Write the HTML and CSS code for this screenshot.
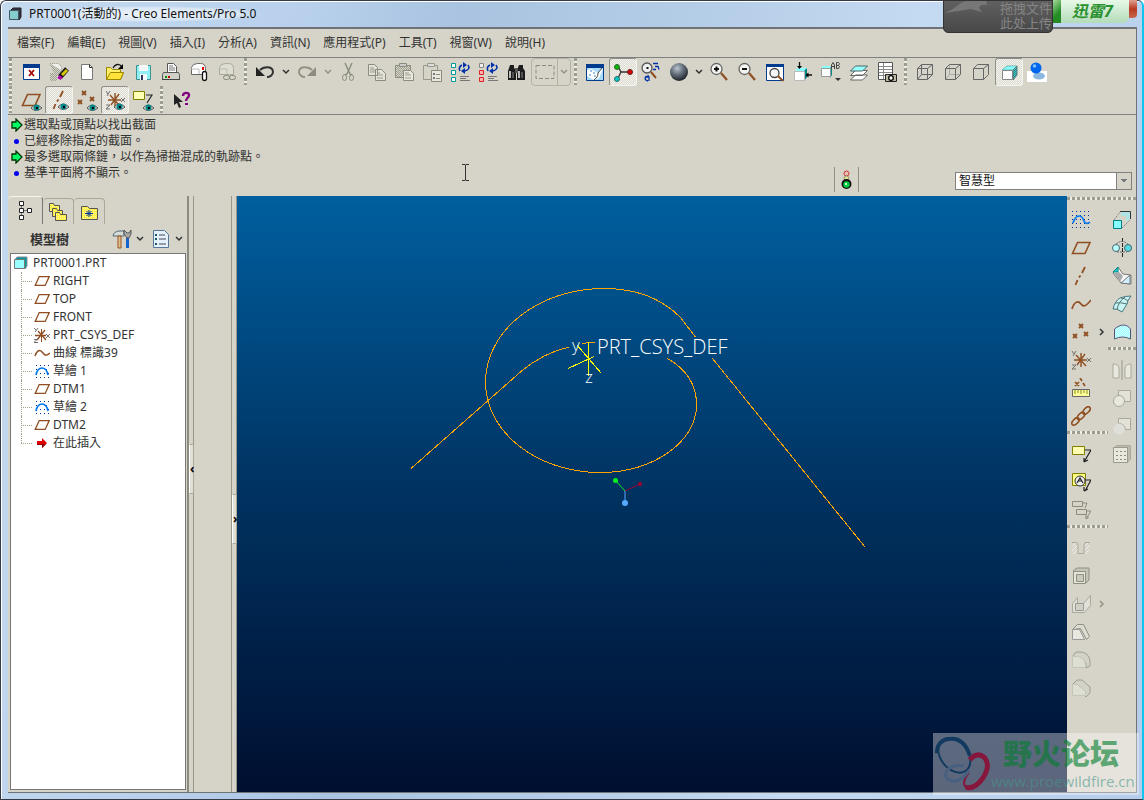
FILE: index.html
```html
<!DOCTYPE html>
<html lang="zh-Hant">
<head>
<meta charset="utf-8">
<title>PRT0001(活動的) - Creo Elements/Pro 5.0</title>
<link rel="stylesheet" href="styles.css">
</head>
<body>
<svg class="sprite" aria-hidden="true">
  <defs>
    <pattern id="dither" width="2" height="2" patternUnits="userSpaceOnUse"><path d="M0 0h1v1H0zM1 1h1v1H1z" fill="#a0a090"/></pattern>
    <pattern id="cyandither" width="2" height="2" patternUnits="userSpaceOnUse"><path d="M0 0h2v2H0z" fill="#99ffff"/><path d="M0 0h1v1H0zM1 1h1v1H1z" fill="#d8ffff"/></pattern>
    <pattern id="tealdither" width="2" height="2" patternUnits="userSpaceOnUse"><path d="M0 0h2v2H0z" fill="#009999"/><path d="M0 0h1v1H0zM1 1h1v1H1z" fill="#66b8b8"/></pattern>
    <pattern id="yellowdither" width="2" height="2" patternUnits="userSpaceOnUse"><path d="M0 0h2v2H0z" fill="#ffee44"/><path d="M0 0h1v1H0z" fill="#fff8a0"/></pattern>
    <radialGradient id="ball" cx=".4" cy=".3" r=".75"><stop offset="0" stop-color="#b8c4d0"/><stop offset=".45" stop-color="#66717d"/><stop offset="1" stop-color="#15181c"/></radialGradient>
  </defs>
  <symbol id="i-chev" viewBox="0 0 8 8"><path d="M1 2l3 3 3-3" fill="none" stroke="currentColor" stroke-width="1.500"/></symbol>
  <symbol id="i-chevr" viewBox="0 0 8 8"><path d="M2 1l3 3-3 3" fill="none" stroke="currentColor" stroke-width="1.500"/></symbol>
  <symbol id="i-plane" viewBox="0 0 20 20"><path d="M6.500 4.500H19l-5 11H1.500z" fill="none" stroke="#8f4f22" stroke-width="1.600"/></symbol>
  <symbol id="i-axis" viewBox="0 0 20 20"><path d="M14 1l-3 6M9.500 9.500l-1.500 2M6.500 14l-2 5" fill="none" stroke="#8f4f22" stroke-width="1.800"/></symbol>
  <symbol id="i-curve" viewBox="0 0 20 20"><path d="M1 15C3 8 7 6 10 10s6 1 10-4" fill="none" stroke="#8f4f22" stroke-width="1.700"/></symbol>
  <symbol id="i-curve-s" viewBox="0 0 16 16"><path d="M1 11C3 5 6 4 9 8s4 2 7 0" fill="none" stroke="#8f4f22" stroke-width="1.500"/></symbol>
  <symbol id="i-points" viewBox="0 0 20 20"><path d="M8 2l4 4m0-4L8 6M2 12l4 4m0-4l-4 4M13 10l4 4m0-4l-4 4" fill="none" stroke="#8f4f22" stroke-width="1.800"/></symbol>
  <symbol id="i-csys" viewBox="0 0 20 20"><path d="M3 10h13M6 15L14 4M5 5l10 11M10 3v14" fill="none" stroke="#8f4f22" stroke-width="1.400"/><path d="M1 1l2 3m2-3L2 6M16 8l4 4m0-4l-4 4M1 15h4l-4 4h4" fill="none" stroke="#707070"/></symbol>
  <symbol id="i-csys-s" viewBox="0 0 16 16"><path d="M1 8.500h11M3 13l8-10M4 4l8 9" fill="none" stroke="#8f4f22" stroke-width="1.300"/><path d="M7.500 2v13" stroke="#8f4f22"/><path d="M0 1l2 2m2-2L1 5M12 7l4 4m0-4l-4 4M0 12.500h3l-3 3h4" fill="none" stroke="#707070"/></symbol>
  <symbol id="i-sketch" viewBox="0 0 20 20"><path d="M1 1.500h18M1 5.500h18M1 9.500h18M1 13.500h18M1 17.500h18" stroke="#003399" stroke-dasharray="1 3"/><path d="M2 13C4 7 6 6 8 6s4 2 5 5 4 3 6 1" fill="none" stroke="#0078f0" stroke-width="1.700"/></symbol>
  <symbol id="i-sketch-s" viewBox="0 0 16 16"><path d="M2 2.500h13M2 6.500h3M12 6.500h3M2 10.500h13M2 14.500h13" stroke="#003399" stroke-dasharray="1 3"/><path d="M2 12C3 7 5 5 8 5s5 2 6 7" fill="none" stroke="#0078f0" stroke-width="1.700"/></symbol>
  <symbol id="i-eye" viewBox="0 0 11 7"><path d="M0 4Q5 -2 11 4Q5 9 0 4z" fill="#ddd" stroke="#555"/><circle cx="5.500" cy="3.500" r="3" fill="#008888"/><path d="M5 3h2v2H5z" fill="#000"/></symbol>
  <symbol id="i-cube" viewBox="0 0 16 16"><path d="M2 5l2-3h10v9l-2 3z" fill="#009999" stroke="#889"/><path d="M1.500 4.500h10v9h-10z" fill="#99ffff" stroke="#777"/></symbol>
  <symbol id="i-tag" viewBox="0 0 20 20"><path d="M1.500 2.500h12v8h-12z" fill="#ffffb4" stroke="#808000"/><path d="M14 6h6l-7 12M13 18v-4m0 4l4-2" fill="none" stroke="#222" stroke-width="1.200"/></symbol>
  <symbol id="i-go" viewBox="0 0 12 14"><path d="M1 4h4V1l6 6-6 6v-3H1z" fill="#00ff66" stroke="#003300" stroke-width="1.300"/></symbol>
</svg>

<div class="window">
  <header class="titlebar">
    <svg class="s16" viewBox="0 0 16 16"><path d="M2 5l3-3h8v9l-2 3z" fill="#334" stroke="#222"/><path d="M1.500 4.500h9v9h-9z" fill="#84cfcc" stroke="#456"/></svg>
    <h1>PRT0001(活動的) - Creo Elements/Pro 5.0</h1>
  </header>

  <div class="client">
    <nav class="menubar">
      <button>檔案(F)</button><button>編輯(E)</button><button>視圖(V)</button><button>插入(I)</button><button>分析(A)</button><button>資訊(N)</button><button>應用程式(P)</button><button>工具(T)</button><button>視窗(W)</button><button>說明(H)</button>
    </nav>

    <div class="toolbars">
      <div class="toolrow">
        <i class="grip"></i>
        <button class="tool" aria-label="關閉視窗"><svg viewBox="0 0 20 20"><path d="M2.500 2.500h16v15h-16z" fill="#fff" stroke="#003b8e"/><path d="M2 2h17v4H2z" fill="#003b8e"/><path d="M8 8l5 6M13 8l-5 6" stroke="#a80000" stroke-width="1.700"/></svg></button>
        <button class="tool" aria-label="拭除"><svg viewBox="0 0 20 20"><path d="M0 1h9l4 4v5l-5 3v6H1v-8h4z" fill="url(#dither)"/><path d="M2 2h7l3 3v3z" fill="#f0f0ec"/><path d="M18 7l-7 8" stroke="#111" stroke-width="5"/><path d="M18 8l-5 5" stroke="#d4c800" stroke-width="3"/><path d="M12 14l-2 3" stroke="#aa00aa" stroke-width="4"/></svg></button>
        <button class="tool" aria-label="新建"><svg viewBox="0 0 20 20"><path d="M4.500 2.500h8l3 3v12h-11z" fill="#fff" stroke="#777"/><path d="M12.500 2.500v3h3" fill="none" stroke="#333"/></svg></button>
        <button class="tool" aria-label="開啟"><svg viewBox="0 0 20 20"><path d="M1.500 17.500v-12h4l2 2h8v3h3l-3 7z" fill="#ffef65" stroke="#998700"/><path d="M1.500 17.500l4-7h13l-3 7z" fill="#ffe23a" stroke="#998700"/><path d="M8 6c2-4 6-5 9-1" fill="none" stroke="#111" stroke-width="1.300"/><path d="M18 2v5h-5z"/></svg></button>
        <button class="tool" aria-label="儲存"><svg viewBox="0 0 20 20"><path d="M3.500 3.500h14v14h-14z" fill="#8cf0f4" stroke="#409090"/><path d="M6 3h9v6H6zM7 12h7v6H7z" fill="#f4f8f8"/><path d="M8 13h2v5H8z" fill="#335"/></svg></button>
        <button class="tool" aria-label="列印"><svg viewBox="0 0 20 20"><path d="M6.500 1.500h6l3 3v6h-9z" fill="#fff" stroke="#555"/><path d="M8 4h4M8 6h6M8 8h6" stroke="#777"/><path d="M2.500 10.500h15l1 2v5h-17v-5z" fill="#d0d0c8" stroke="#555"/><path d="M1 17.500h18" stroke="#444"/><path d="M4 14h2v2H4z" fill="#090"/><path d="M7 14h2v2H7z" fill="#c00"/></svg></button>
        <button class="tool" aria-label="傳送郵件"><svg viewBox="0 0 20 20"><path d="M2.500 12.500v-7q1-4 6-4h3q5 0 5 5v6z" fill="#fff" stroke="#666"/><path d="M2 7h8v5" fill="none" stroke="#bbb"/><path d="M13 5h2v3h-2z" fill="#d00"/><rect x="13.500" y="9.500" width="4" height="9" rx="2" fill="#fff" stroke="#111" stroke-width="1.300"/></svg></button>
        <button class="tool" aria-label="傳送連結" disabled><svg viewBox="0 0 20 20"><path d="M2.500 12.500v-7q1-4 6-4h3q5 0 5 5v6z" fill="#ddddd2" stroke="#aaa99b"/><path d="M2 7h8v5" fill="none" stroke="#bbb"/><rect x="6.500" y="13.500" width="6" height="4" rx="2" fill="none" stroke="#88887a"/><rect x="12.500" y="13.500" width="6" height="4" rx="2" fill="none" stroke="#88887a"/></svg></button>
        <i class="grip sep"></i>
        <button class="tool" aria-label="還原"><svg viewBox="0 0 20 20"><path d="M5 8c4-4 13-4 13 2 0 3-3 5-6 5" fill="none" stroke="#333" stroke-width="2"/><path d="M1 5v9h9z" fill="#222"/></svg></button>
        <button class="drop" aria-label="還原選單"><svg><use href="#i-chev"/></svg></button>
        <button class="tool" aria-label="取消還原" disabled><svg viewBox="0 0 20 20"><path d="M15 8c-4-4-13-4-13 2 0 3 3 5 6 5" fill="none" stroke="#929285" stroke-width="2"/><path d="M19 5v9h-9z" fill="#8c8c80"/></svg></button>
        <button class="drop" aria-label="取消還原選單" disabled><svg><use href="#i-chev"/></svg></button>
        <button class="tool" aria-label="剪下" disabled><svg viewBox="0 0 20 20"><path d="M6 1l5 11M13 1L8 12M8 12l-2 1m5-1l2 1" fill="none" stroke="#8b8b7e" stroke-width="1.400"/><ellipse cx="5.500" cy="15.500" rx="2" ry="3" fill="none" stroke="#8b8b7e"/><ellipse cx="12.500" cy="15.500" rx="2" ry="3" fill="none" stroke="#8b8b7e"/></svg></button>
        <button class="tool" aria-label="複製" disabled><svg viewBox="0 0 20 20"><path d="M1.500 2.500h6l3 3v8h-9zM8.500 7.500h6l4 4v7h-10z" fill="#e2e2d8" stroke="#8b8b7e"/><path d="M3 6h4M3 8h5M3 10h5M10 11h3M10 13h6M10 16h6" stroke="#99998c"/></svg></button>
        <button class="tool" aria-label="貼上" disabled><svg viewBox="0 0 20 20"><path d="M.500 3.500h15v12H.500z" fill="url(#dither)" stroke="#8b8b7e"/><path d="M4.500 1.500h7v3h-7z" fill="#ccc" stroke="#8b8b7e"/><path d="M8.500 8.500h7l3 3v7h-10z" fill="#e8e8de" stroke="#8b8b7e"/><path d="M10 11h4M10 13h6M10 16h6" stroke="#99998c"/></svg></button>
        <button class="tool" aria-label="選擇性貼上" disabled><svg viewBox="0 0 20 20"><path d="M.500 3.500h14v14H.500z" fill="#d6d4c8" stroke="#99998c"/><path d="M4.500 1.500h7v3h-7z" fill="#ddd" stroke="#99998c"/><path d="M8.500 8.500h10v11h-10z" fill="#e8e8de" stroke="#8b8b7e"/><path d="M10 11h2v2h-2zM10 15h2v2h-2z" fill="#777"/><path d="M13 12.500h4M13 16.500h4" stroke="#88887a"/></svg></button>
        <button class="tool" aria-label="再生"><svg viewBox="0 0 20 20"><path d="M.500 1.500h4v4h-4zM.500 8.500h4v4h-4zM.500 15.500h4v4h-4z" fill="#fff" stroke="#009999"/><path d="M9 9Q7 5 11 3M17 3Q20 7 14 9" fill="none" stroke="#0033aa" stroke-width="1.600"/><path d="M12 0l4 3-4 3zM14 6v6l-4-3z" fill="#0033aa"/><path d="M9 14.500h9M9 16.500h6M9 18.500h10" stroke="#777"/></svg></button>
        <button class="tool" aria-label="再生管理員"><svg viewBox="0 0 20 20"><path d="M.500 1.500h4v4h-4z" fill="#eee" stroke="#888"/><path d="M.500 8.500h4v4h-4zM.500 15.500h4v4h-4z" fill="#ffb0b0" stroke="#dd2222"/><path d="M9 9Q7 5 11 3M17 3Q20 7 14 9" fill="none" stroke="#0033aa" stroke-width="1.600"/><path d="M12 0l4 3-4 3zM14 6v6l-4-3z" fill="#0033aa"/><path d="M9 14.500h9M9 16.500h6M9 18.500h10" stroke="#777"/></svg></button>
        <button class="tool" aria-label="尋找"><svg viewBox="0 0 20 20"><path d="M3 3h4v3l2 2v10H1V9zM12 3h4v3l2 3v9h-8V8z" fill="#1c1c1c"/><path d="M8 6h3v5H8z" fill="#555"/><path d="M3 9v7M12 9v7" stroke="#eee" stroke-width="1.500"/><path d="M6 10v6M15 10v6" stroke="#888"/></svg></button>
        <div class="split">
          <button aria-label="選取框" disabled><svg class="s20" viewBox="0 0 20 20"><path d="M1 3.500h18v13H1z" fill="none" stroke="#8a8a7e" stroke-dasharray="4 2"/></svg></button>
          <button class="drop" aria-label="選取選單" disabled><svg><use href="#i-chev"/></svg></button>
        </div>
        <i class="grip sep"></i>
        <button class="tool" aria-label="重繪"><svg viewBox="0 0 20 20"><path d="M1.500 2.500h17v16h-17z" fill="#a8dcf8" stroke="#003b8e"/><path d="M1 2h18v4H1z" fill="#003b8e"/><path d="M2 8l4-1 7 4 3-4 2 0-4 9-5 2-7-4z" fill="#fff"/><path d="M17 6l-4 5c0 4-1 4-4 7" fill="none" stroke="#444"/><path d="M5 9h2M8 11h2M9 14h2M4 13h2" stroke="#38c"/></svg></button>
        <button class="tool pressed" aria-label="旋轉中心"><svg viewBox="0 0 20 20"><path d="M5 4l3 6h10M8 10l-3 6" fill="none" stroke="#333" stroke-width="1.300"/><circle cx="4" cy="5" r="2.500" fill="#0b0" stroke="#363"/><circle cx="17" cy="10" r="2.500" fill="#d00" stroke="#622"/><circle cx="4" cy="17" r="2.500" fill="#0cc" stroke="#366"/></svg></button>
        <button class="tool" aria-label="定向模式"><svg viewBox="0 0 20 20"><circle cx="6" cy="6" r="5" fill="#eee" stroke="#555" stroke-width="1.300"/><path d="M5.500 6h2" stroke="#111" stroke-width="2"/><path d="M10 10l5 6" stroke="#8f4f22" stroke-width="2"/><path d="M12 1.500h5M14 4.500h3l1 3M12 7.500h3M8 14c-5 0-5 4-1 5M8 19v-4h-3" fill="none" stroke="#0033aa" stroke-width="1.300"/></svg></button>
        <button class="tool" aria-label="外觀庫"><svg viewBox="0 0 20 20"><circle cx="10" cy="10" r="9" fill="url(#ball)"/></svg></button>
        <button class="drop narrow" aria-label="外觀選單"><svg><use href="#i-chev"/></svg></button>
        <button class="tool" aria-label="放大"><svg viewBox="0 0 20 20"><circle cx="7.500" cy="7" r="5.500" fill="#f4f4f0" stroke="#666" stroke-width="1.300"/><path d="M5 7h5M7.500 4.500v5" stroke="#111" stroke-width="2"/><path d="M12 11l6 7" stroke="#8f4f22" stroke-width="2.200"/></svg></button>
        <button class="tool" aria-label="縮小"><svg viewBox="0 0 20 20"><circle cx="7.500" cy="7" r="5.500" fill="#f4f4f0" stroke="#666" stroke-width="1.300"/><path d="M5 7h5" stroke="#111" stroke-width="2"/><path d="M12 11l6 7" stroke="#8f4f22" stroke-width="2.200"/></svg></button>
        <button class="tool" aria-label="重新調整"><svg viewBox="0 0 20 20"><path d="M1.500 2.500h17v16h-17z" fill="#fff" stroke="#003b8e"/><path d="M1 2h18v3H1z" fill="#003b8e"/><circle cx="9.500" cy="11" r="4.500" fill="#f8f8f8" stroke="#444" stroke-width="1.300"/><path d="M13 14l5 5" stroke="#8f4f22" stroke-width="2"/></svg></button>
        <button class="tool" aria-label="重新定向"><svg viewBox="0 0 20 20"><path d="M2 9l3-3h9l-3 3z" fill="#8ff"/><path d="M11 9l3-3v9l-3 4z" fill="#008080"/><path d="M1.500 9.500h10v9h-10z" fill="#fff" stroke="#bbb"/><path d="M6.500 0v5M19 13h-5" stroke="#111" stroke-width="1.300"/><path d="M4 4h5l-2.500 3zM15.500 10.500v5l-3-2.500z"/></svg></button>
        <button class="tool" aria-label="已儲存的視圖"><svg viewBox="0 0 20 20"><path d="M0 6l2-2h8l-2 3z" fill="#8ff"/><path d="M9 6l2-2v9l-2 3z" fill="#088"/><path d="M.500 6.500h9v8h-9z" fill="#fff" stroke="#999"/><path d="M10.500 7V3l1.500-2.500L13.500 3v4M10.500 4.500h3M15.500.500h2l1 1-1 2h-2zm0 3h2l1 1-1 2h-2z" fill="none" stroke="#444"/><path d="M14 16h6l-3 3z" fill="#333"/></svg></button>
        <button class="tool" aria-label="圖層"><svg viewBox="0 0 20 20"><path d="M1.500 18l5-5h12l-5 5zM1.500 13.500l5-5h12l-5 5z" fill="#fff" stroke="#666"/><path d="M1.500 9l5-5h12l-5 5z" fill="#9ff" stroke="#466"/></svg></button>
        <button class="tool" aria-label="視圖管理員"><svg viewBox="0 0 20 20"><path d="M1.500.500h14v17h-14z" fill="#fff" stroke="#555"/><path d="M6.500 1v16M2 4.500h13M2 7.500h13M2 10.500h13M2 13.500h13" stroke="#888"/><path d="M8.500 12.500h11v7h-11z" fill="#bbb8a4" stroke="#222"/><circle cx="14" cy="16" r="2.300" fill="#fff" stroke="#000" stroke-width="1.300"/></svg></button>
        <i class="grip sep"></i>
        <button class="tool" aria-label="線框"><svg viewBox="0 0 20 20"><path d="M2.500 6.500h10v11h-10zM6.500 2.500h11v10h-11zM2.500 6.500l4-4M12.500 6.500l5-4M2.500 17.500l4-5M12.500 17.500l5-5" fill="none" stroke="#666"/></svg></button>
        <button class="tool" aria-label="隱藏線"><svg viewBox="0 0 20 20"><path d="M6.500 3v9.500H17M6.500 12.500l-4 5" fill="none" stroke="#aaa"/><path d="M2.500 6.500h10v11h-10zM2.500 6.500l4-4h11l-5 4M17.500 2.500v10l-5 5" fill="none" stroke="#666"/></svg></button>
        <button class="tool" aria-label="無隱藏線"><svg viewBox="0 0 20 20"><path d="M2.500 6.500h10v11h-10zM2.500 6.500l4-4h11l-5 4M17.500 2.500v10l-5 5" fill="none" stroke="#666"/></svg></button>
        <button class="tool pressed" aria-label="著色"><svg viewBox="0 0 20 20"><path d="M3 8l5-4h10l-4 4z" fill="#8ff" stroke="#6bb"/><path d="M14 8l4-4v9l-4 5z" fill="url(#tealdither)" stroke="#577"/><path d="M3.500 8.500h10v9h-10z" fill="#fff" stroke="#888"/></svg></button>
        <button class="tool" aria-label="增強真實感"><svg viewBox="0 0 20 20"><path d="M0 9h20v11H0z" fill="#fff"/><ellipse cx="12" cy="14" rx="6" ry="3.500" fill="#8db8df"/><circle cx="9" cy="6" r="5.500" fill="#0066ee"/><circle cx="7.500" cy="4" r="1.800" fill="#7cc4ff"/></svg></button>
      </div>
      <div class="toolrow">
        <i class="grip"></i>
        <button class="tool" aria-label="顯示基準平面"><svg><use href="#i-plane"/></svg><svg class="eye"><use href="#i-eye"/></svg></button>
        <button class="tool pressed" aria-label="顯示基準軸"><svg><use href="#i-axis"/></svg><svg class="eye"><use href="#i-eye"/></svg></button>
        <button class="tool" aria-label="顯示基準點"><svg viewBox="0 0 20 20"><path d="M5 1l4 4m0-4L5 5M1 10l4 4m0-4l-4 4M13 7l4 4m0-4l-4 4" fill="none" stroke="#8f4f22" stroke-width="1.800"/></svg><svg class="eye"><use href="#i-eye"/></svg></button>
        <button class="tool pressed" aria-label="顯示座標系"><svg><use href="#i-csys"/></svg><svg class="eye"><use href="#i-eye"/></svg></button>
        <button class="tool" aria-label="顯示註解"><svg viewBox="0 0 20 20"><path d="M.500 1.500h11v8H.500z" fill="#ffffb4" stroke="#808000"/><path d="M13 5h6l-5 8" fill="none" stroke="#222" stroke-width="1.200"/></svg><svg class="eye"><use href="#i-eye"/></svg></button>
        <i class="grip sep"></i>
        <button class="tool" aria-label="即時說明"><svg viewBox="0 0 20 20"><path d="M3 4v11l3-2 2 5 2-1-2-5h4z" fill="#222"/><path d="M12 6c0-4 6-4 6-1 0 3-3 3-3 6" fill="none" stroke="#800080" stroke-width="2.400"/><path d="M14 13h3v2h-3z" fill="#800080"/></svg></button>
      </div>
    </div>

    <section class="message-area">
      <ul class="messages">
        <li><svg class="go"><use href="#i-go"/></svg>選取點或頂點以找出截面</li>
        <li><i class="bullet"></i>已經移除指定的截面。</li>
        <li><svg class="go"><use href="#i-go"/></svg>最多選取兩條鏈，以作為掃描混成的軌跡點。</li>
        <li><i class="bullet"></i>基準平面將不顯示。</li>
      </ul>
      <div class="status-light"><svg viewBox="0 0 12 20"><circle cx="5.500" cy="3.500" r="2.500" fill="#e9c0b0" stroke="#c33"/><circle cx="5.500" cy="8.500" r="2.500" fill="#e8e0a0" stroke="#996"/><circle cx="5.500" cy="14" r="5" fill="#111"/><circle cx="5.500" cy="14.500" r="3.200" fill="#00cc44"/><path d="M4 13h2v2H4z" fill="#bfb"/></svg></div>
      <select class="filter" aria-label="選取篩選器"><option>智慧型</option></select>
      <svg class="ibeam" viewBox="0 0 9 17"><path d="M1 .500h3l.500 1 .500-1h3M1 16.500h3l.500-1 .500 1h3M4.500 1v15" fill="none" stroke="#333"/></svg>
    </section>

    <main class="workspace">
      <aside class="navigator">
        <div class="tabs">
          <button class="tab active" aria-label="模型樹"><svg viewBox="0 0 20 20"><path d="M6.500 4v12M7 9.500h6" stroke="#777"/><path d="M4.500.500h4v4h-4zM4.500 7.500h4v4h-4zM4.500 14.500h4v4h-4zM12.500 7.500h4v4h-4z" fill="#fff" stroke="#222"/></svg></button>
          <button class="tab" aria-label="資料夾瀏覽器"><svg viewBox="0 0 20 20"><g fill="url(#yellowdither)" stroke="#555"><path d="M1.500 9.500v-8h4l1 2h5v6z"/><path d="M4.500 14.500v-8h4l1 2h5v6z"/><path d="M7.500 18.500v-8h4l1 2h6v6z"/></g></svg></button>
          <button class="tab" aria-label="我的最愛"><svg viewBox="0 0 20 20"><path d="M2.500 17.500v-13h6l2 2h8v11z" fill="url(#yellowdither)" stroke="#555"/><path d="M6 11.500h8M10 8v7M7.500 9l5 5m0-5l-5 5" stroke="#003399"/></svg></button>
        </div>
        <div class="tree-head">
          <h2>模型樹</h2>
          <button class="head-tool" aria-label="設定"><svg class="s20" viewBox="0 0 20 20"><path d="M1 7q1-5 7-5h4v5H5z" fill="#d5ddd9" stroke="#567"/><path d="M6 7h3v12H6z" fill="#ddc090" stroke="#995522"/><path d="M14 9h3v10h-3z" fill="#1662cc"/><path d="M15 9l-3-4V1l3 3h2l2-3v4l-2 4z" fill="#aaa" stroke="#555"/></svg><svg class="chev"><use href="#i-chev"/></svg></button>
          <button class="head-tool" aria-label="顯示"><svg class="s20" viewBox="0 0 20 20"><path d="M2.500 1.500h11l4 4v13h-15z" fill="#e4f1fc" stroke="#57779a"/><path d="M8 6h6M8 10h7M8 15h7" stroke="#445"/><path d="M4 5h2v2H4zM4 9h2v2H4zM4 14h2v2H4z" fill="#256"/></svg><svg class="chev"><use href="#i-chev"/></svg></button>
        </div>
        <div class="tree">
          <div class="root"><svg class="s16"><use href="#i-cube"/></svg>PRT0001.PRT</div>
          <ul>
            <li><svg class="s16"><use href="#i-plane"/></svg>RIGHT</li>
            <li><svg class="s16"><use href="#i-plane"/></svg>TOP</li>
            <li><svg class="s16"><use href="#i-plane"/></svg>FRONT</li>
            <li><svg class="s16"><use href="#i-csys-s"/></svg>PRT_CSYS_DEF</li>
            <li><svg class="s16"><use href="#i-curve-s"/></svg>曲線 標識39</li>
            <li><svg class="s16"><use href="#i-sketch-s"/></svg>草繪 1</li>
            <li><svg class="s16"><use href="#i-plane"/></svg>DTM1</li>
            <li><svg class="s16"><use href="#i-sketch-s"/></svg>草繪 2</li>
            <li><svg class="s16"><use href="#i-plane"/></svg>DTM2</li>
            <li><svg class="s16" viewBox="0 0 16 16"><path d="M3 6h5V3l5 5-5 5v-3H3z" fill="#e00000"/><path d="M3 9h9l-4 4v-3H3z" fill="#880000"/></svg>在此插入</li>
          </ul>
        </div>
      </aside>
      <div class="sash"><button class="sash-left" aria-label="收合">‹</button></div>
      <div class="browser-pane"></div>
      <div class="sash"><button class="sash-right" aria-label="展開">›</button></div>

      <div class="viewport">
        <svg viewBox="237 196 830 596" role="img" aria-label="模型">
          <g class="wire">
            <path d="M411 468.500L521 371.500C537 358 552 351 569 347M582 343.500L595 342"/>
            <path d="M667.500 358.500C688 370 696.500 387 696.500 405C696.500 442 653 472.500 600 472.500C537 472.500 485.500 432 485.500 382C485.500 331 538 288.500 604 288.500C640 288.500 664 301 680 317L695.500 337"/>
            <path d="M712.500 358.500L865 547"/>
          </g>
          <path class="csys" d="M588.500 342v34M577 345l24 28M568 368.500l26-12"/>
          <text x="572" y="351" class="axis-label">y</text>
          <text x="585" y="383" class="axis-label">z</text>
          <text x="597" y="354" class="part-label">PRT_CSYS_DEF</text>
          <path d="M625 491l-9-10" stroke="#00ee22"/><path d="M625 491l15-7" stroke="#a00030"/><path d="M625 491v11" stroke="#55aaff"/>
          <circle cx="615.500" cy="480.500" r="2.500" fill="#00ee22"/><circle cx="640" cy="484" r="2" fill="#a00030"/><circle cx="625" cy="503" r="3" fill="#55aaff"/>
        </svg>
      </div>

      <aside class="side-tools">
        <div class="toolcol wide">
          <i class="hgrip"></i>
          <button class="tool" aria-label="草繪工具"><svg><use href="#i-sketch"/></svg></button>
          <button class="tool" aria-label="基準平面工具"><svg><use href="#i-plane"/></svg></button>
          <button class="tool" aria-label="基準軸工具"><svg><use href="#i-axis"/></svg></button>
          <button class="tool" aria-label="曲線工具"><svg><use href="#i-curve"/></svg></button>
          <div class="flyout"><button class="tool" aria-label="基準點工具"><svg><use href="#i-points"/></svg></button><button class="drop" aria-label="更多基準點"><svg><use href="#i-chevr"/></svg></button></div>
          <button class="tool" aria-label="座標系工具"><svg><use href="#i-csys"/></svg></button>
          <button class="tool" aria-label="分析特徵"><svg viewBox="0 0 20 20"><path d="M4 4l4 4m0-4L4 8M9 0l2 3M12 5l2 3" stroke="#8f4f22" stroke-width="1.700"/><path d="M1.500 11.500h17v7h-17z" fill="#ffff99" stroke="#666"/><path d="M4 12v4M7 12v3M10 12v4M13 12v3M16 12v4" stroke="#888820"/></svg></button>
          <button class="tool" aria-label="參照特徵"><svg viewBox="0 0 20 20"><g fill="none" stroke="#8f4f22" stroke-width="1.600"><ellipse cx="4.500" cy="15.500" rx="4.500" ry="2.500" transform="rotate(-45 4.500 15.500)"/><ellipse cx="10" cy="10" rx="4.500" ry="2.500" transform="rotate(-45 10 10)"/><ellipse cx="15.500" cy="4.500" rx="4.500" ry="2.500" transform="rotate(-45 15.500 4.500)"/></g></svg></button>
          <i class="hgrip sep"></i>
          <button class="tool" aria-label="註解特徵"><svg><use href="#i-tag"/></svg></button>
          <button class="tool" aria-label="註解元素"><svg viewBox="0 0 20 20"><path d="M1.500 1.500h13v12h-13z" fill="#ffff80" stroke="#808000"/><circle cx="9" cy="9" r="5" fill="#eee" stroke="#333"/><path d="M6 11l3-5 3 5M7 9h4M14 8h6l-6 11M13 19v-4m0 4l4-2" fill="none" stroke="#222" stroke-width="1.200"/></svg></button>
          <button class="tool" aria-label="註解傳播" disabled><svg viewBox="0 0 20 20"><path d="M1.500 1.500h10v5h-10zM5.500 9.500h10v5h-10zM12 3h4l-2 5M16 11h4l-5 8v-4m0 4l3-2" fill="none" stroke="#8b8b7e"/></svg></button>
          <i class="hgrip sep"></i>
          <button class="tool" aria-label="孔" disabled><svg viewBox="0 0 20 20"><path d="M2 8l4-4M1 13l5-5M2 16l5-5M14 8l4-4M14 12l5-5M14 16l4-4" stroke="#eee"/><path d="M1 4.500h5l1 3v8h6v-8l1-3h5" fill="none" stroke="#aaa99b"/></svg></button>
          <button class="tool" aria-label="殼" disabled><svg viewBox="0 0 20 20"><path d="M2 5l4-3h12v12l-3 3z" fill="#c4c4b8" stroke="#8f8f82"/><path d="M2.500 5.500h12v12h-12z" fill="#e4e4da" stroke="#8f8f82"/><path d="M5.500 8.500h7v7h-7z" fill="#cacabc" stroke="#8f8f82"/></svg></button>
          <div class="flyout"><button class="tool" aria-label="肋" disabled><svg viewBox="0 0 20 20"><path d="M1.500 9.500l5-6v6h6l7-8v10l-6 7h-12z" fill="#e0e0d6" stroke="#aaa99b"/><path d="M4.500 9.500h8v7h-8z" fill="#d0d0c4" stroke="#999"/></svg></button><button class="drop" aria-label="更多肋" disabled><svg><use href="#i-chevr"/></svg></button></div>
          <button class="tool" aria-label="拔模" disabled><svg viewBox="0 0 20 20"><path d="M1.500 7.500l5-5h6l6 12-3 3-6-11z" fill="#dcdcd2" stroke="#8f8f82"/><path d="M1.500 7.500h7l5 10h-12z" fill="#e8e8de" stroke="#999"/></svg></button>
          <button class="tool" aria-label="倒圓角" disabled><svg viewBox="0 0 20 20"><path d="M2 6q2-4 4-4h4q8 1 9 9v5l-4 2v-5z" fill="#d2d2c6" stroke="#9f9f92"/><path d="M1.500 6.500h5q7 1 8 8v3h-13z" fill="#dedfd4" stroke="#c4c4b8"/></svg></button>
          <button class="tool" aria-label="倒角" disabled><svg viewBox="0 0 20 20"><path d="M2 6l4-4h5l8 7v6l-4 4z" fill="#d2d2c6" stroke="#9f9f92"/><path d="M1.500 6.500h5l8 7v4h-13z" fill="#dedfd4" stroke="#c4c4b8"/></svg></button>
        </div>
        <div class="toolcol">
          <i class="hgrip"></i>
          <button class="tool" aria-label="拉伸"><svg viewBox="0 0 20 20"><path d="M9 2h9v7l-4 3V6H9z" fill="#b0e4e4"/><path d="M8 1.500h10.500V9" fill="none" stroke="#333"/><path d="M2 10l6-8M10 18l8-8" stroke="#888" stroke-dasharray="2 1"/><path d="M1.500 10.500h8v8h-8z" fill="#8ff" stroke="#008080"/></svg></button>
          <button class="tool" aria-label="旋轉"><svg viewBox="0 0 20 20"><path d="M10.500 0v20" stroke="#222" stroke-dasharray="4 1"/><circle cx="4" cy="10" r="3.500" fill="#bff" stroke="#467"/><circle cx="16" cy="10" r="3.500" fill="#5dd" stroke="#467"/><path d="M4 6q6-5 12 0M5 14h10" fill="none" stroke="#666" stroke-dasharray="2 1"/></svg></button>
          <button class="tool" aria-label="可變截面掃描"><svg viewBox="0 0 20 20"><path d="M6 1l5 7 8 1v9l-10-1L1 7z" fill="#f4f4f4" stroke="#777"/><path d="M1 6l5-5v5z" fill="#2cc" stroke="#088"/><path d="M9 17l9-8v9z" fill="#cfefff" stroke="#777"/><path d="M2 7l5-1 4 4-3 6z" fill="#aaa"/></svg></button>
          <button class="tool" aria-label="邊界混成"><svg viewBox="0 0 20 20"><path d="M1 15Q3 7 8 4q5-2 11-2-4 5-4 8l-5 8q-5-4-9-3z" fill="#c8f4f4" stroke="#487880"/><path d="M5 16q1-8 8-13M3 9q5-1 12 1M9 4q4 0 7 3" fill="none" stroke="#577"/></svg></button>
          <button class="tool" aria-label="造型"><svg viewBox="0 0 20 20"><path d="M2.500 17V7q7-6 13-3l3 3v10q-8-4-16 0z" fill="url(#cyandither)" stroke="#557"/></svg></button>
          <i class="hgrip sep"></i>
          <button class="tool" aria-label="鏡像" disabled><svg viewBox="0 0 20 20"><path d="M1 4q6 0 6 5v9H1zM19 4q-6 0-6 5v9h6z" fill="#e8e8de" stroke="#aaa99b"/><path d="M10 0v20" stroke="#99998c"/></svg></button>
          <button class="tool" aria-label="合併" disabled><svg viewBox="0 0 20 20"><path d="M6.500 2.500h12v11h-12z" fill="#e2e2d8" stroke="#aaa99b"/><circle cx="7" cy="13" r="5.500" fill="#e8e8de" stroke="#aaa99b"/></svg></button>
          <button class="tool" aria-label="修剪" disabled><svg viewBox="0 0 20 20"><path d="M6.500 2.500h12v11h-5q-1-6-7-6z" fill="#e2e2d8" stroke="#aaa99b"/><circle cx="7" cy="13" r="5.500" fill="#dedfda"/></svg></button>
          <button class="tool" aria-label="陣列" disabled><svg viewBox="0 0 20 20"><path d="M2.500 3.500l2-2h14v14l-3 3z" fill="#bbbbae" stroke="#aaa99b"/><path d="M1.500 3.500h14v15h-14z" fill="#e8e8de" stroke="#99998c"/><path d="M4 7h2v1H4zM8 7h2v1H8zM12 7h2v1h-2zM4 11h2v1H4zM8 11h2v1H8zM12 11h2v1h-2zM4 15h2v1H4zM8 15h2v1H8zM12 15h2v1h-2z" fill="#8b8b7e"/></svg></button>
        </div>
      </aside>
    </main>
  </div>

  <div class="overlay">
    <div class="drop-zone"><svg viewBox="0 0 44 18"><path d="M1 12Q10 8 17 2L22 0H42L43 4Q36 3 35 7L38 11 27 8Q15 10 1 12z" fill="#777"/></svg><div class="drop-text"><span>拖拽文件</span><span>此处上传</span></div></div>
    <div class="green-tip"></div>
    <div class="thunder">迅雷7</div>
    <button class="close" aria-label="關閉"></button>
  </div>

  <div class="watermark">
    <svg viewBox="0 0 60 60"><ellipse cx="22" cy="22" rx="14" ry="20" transform="rotate(-38 22 22)" fill="none" stroke="#123a60" stroke-width="2"/><path d="M4 20Q4 6 18 5T38 22" fill="none" stroke="#123a60" stroke-width="4"/><path d="M38 27Q45 18 53 24 60 32 52 45 43 58 34 55" fill="none" stroke="#87163d" stroke-width="5"/><path d="M34 55Q29 51 37 40" fill="none" stroke="#87163d" stroke-width="2"/><path d="M32 33Q20 31 14 38 10 46 21 49 31 48 37 38" fill="none" stroke="#48607f" stroke-width="3"/></svg>
    <div class="brand"><strong>野火论坛</strong><span>www.proewildfire.cn</span></div>
  </div>
</div>
</body>
</html>
```
FILE: styles.css
```css
* { box-sizing: border-box; }

body {
  margin: 0;
  font: 12px/16px "Noto Sans", "Noto Sans CJK TC", sans-serif;
  color: #333;
}

h1, h2, ul { margin: 0; padding: 0; font: inherit; }
ul { list-style: none; }

button {
  margin: 0;
  padding: 0;
  border: 0;
  background: none;
  font: inherit;
  color: inherit;
}

svg { display: block; flex: none; }
.sprite { position: absolute; width: 0; height: 0; }
.s16 { width: 16px; height: 16px; }
.s20 { width: 20px; height: 20px; }

.window {
  position: relative;
  display: flex;
  flex-direction: column;
  min-height: 100vh;
  padding: 0 5px 6px 7px;
  border: 1px solid #333a48;
  border-right: 2px solid #10c4f0;
  border-radius: 6px 6px 0 0;
  background: linear-gradient(100deg, #c4daef 0, #b8d0ec 24%, #a9c3e0 36%, #b7cfe8 58%, #c4daf2 72%, #b5cdea);
  box-shadow: inset 1px 1px 0 #fff;
}

.titlebar {
  display: flex;
  align-items: center;
  gap: 5px;
  height: 26px;
}
.titlebar h1 {
  padding: 0 8px 0 0;
  color: #111;
  background: radial-gradient(closest-side, rgba(255, 255, 255, .7), rgba(255, 255, 255, .4) 80%, transparent);
}

.client {
  flex: 1;
  display: flex;
  flex-direction: column;
  border: 1px solid #6f7276;
  border-top-width: 2px;
  border-left: 0;
  background: #d6d4c8;
}

.menubar {
  display: flex;
  gap: 1px;
  height: 29px;
  padding-left: 3px;
  border-bottom: 1px solid #808080;
}
.menubar button { padding: 0 6px; }

.toolbars { border-bottom: 1px solid #808080; }
.toolrow { display: flex; height: 28px; }

.tool {
  position: relative;
  display: grid;
  place-items: center;
  width: 28px;
  height: 28px;
  flex: none;
}
.tool svg { width: 20px; height: 20px; }
.tool .eye { position: absolute; right: 3px; bottom: 3px; width: 11px; height: 7px; }
.pressed {
  border: 1px solid #f4f4ee;
  border-top-color: #909088;
  border-left-color: #909088;
  border-radius: 3px;
  background: repeating-conic-gradient(#f4f3ee 0 25%, #dcdad0 0 50%) 0 0 / 2px 2px;
}
.drop { display: grid; place-items: center; width: 14px; flex: none; color: #333; }
.drop.narrow { width: 12px; }
.drop svg, .chev { width: 8px; height: 8px; }
.drop:disabled { color: #929285; }

.grip { width: 9px; padding-left: 1px; }
.grip::before {
  content: "";
  display: block;
  width: 3px;
  height: 27px;
  background: repeating-linear-gradient(#9c9c90 0 3px, #efeee6 3px 5px);
}
.grip.sep { width: 10px; padding-left: 3px; }

.split { display: flex; width: 40px; height: 28px; border: 1px solid #b4b2a4; border-radius: 4px; }
.split button { flex: 1; display: grid; place-items: center; }
.split .drop { flex: none; width: 13px; border-left: 1px solid #b4b2a4; }

.message-area { position: relative; display: flex; align-items: flex-end; height: 81px; padding-right: 4px; }
.messages { flex: 1; align-self: flex-start; padding: 2px 0 0 3px; }
.messages li { display: flex; align-items: center; gap: 1px; height: 16px; }
.go { width: 12px; height: 14px; }
.bullet { width: 12px; flex: none; }
.bullet::before { content: ""; display: block; width: 5px; height: 5px; margin-left: 3px; border-radius: 50%; background: #0000ee; }
.status-light {
  display: grid;
  place-items: center;
  width: 25px;
  height: 25px;
  margin: 0 96px 4px 0;
  border: solid #909088;
  border-width: 0 1px;
}
.status-light svg { width: 12px; height: 20px; }
.filter {
  width: 177px;
  height: 18px;
  margin-bottom: 6px;
  padding: 0 3px;
  border: 1px solid #808080;
  border-radius: 0;
  appearance: none;
  font: inherit;
  line-height: 16px;
  color: #111;
  background:
    linear-gradient(45deg, transparent 50%, #777 0) right 7px top 6px / 4px 4px no-repeat,
    linear-gradient(-45deg, transparent 50%, #777 0) right 3px top 6px / 4px 4px no-repeat,
    linear-gradient(90deg, #808080 1px, #d6d4c8 1px) right / 15px 100% no-repeat,
    #fff;
}
.ibeam { position: absolute; left: 453px; top: 49px; width: 9px; height: 17px; }

.workspace { flex: 1; display: flex; }

.navigator { display: flex; flex-direction: column; width: 181px; flex: none; border-right: 2px solid #8c8c80; }
.tabs { display: flex; align-items: flex-end; height: 28px; }
.tab {
  display: grid;
  place-items: center;
  width: 31px;
  height: 26px;
  border: 1px solid #aaa899;
  border-width: 1px 1px 0 0;
  border-radius: 4px 4px 0 0;
}
.tab svg { width: 20px; height: 20px; }
.tab.active { width: 35px; height: 28px; border-top-color: #f4f4ee; border-right-color: #777; }
.tree-head { display: flex; align-items: center; height: 29px; padding: 0 4px 0 22px; }
.tree-head h2 { flex: 1; font-size: 13px; line-height: 18px; font-weight: bold; }
.head-tool { display: flex; align-items: center; gap: 4px; margin-left: 7px; }
.tree { flex: 1; margin: 0 1px 2px 2px; padding-left: 2px; border: 1px solid #777; background: #fff; }
.root, .tree li { display: flex; align-items: center; gap: 4px; height: 18px; }
.tree ul { margin-left: 8px; }
.tree li { position: relative; padding-left: 13px; gap: 3px; }
.tree li::before, .tree li::after { content: ""; position: absolute; left: 0; }
.tree li::before { top: 0; bottom: 0; border-left: 1px dotted #a0a088; }
.tree li::after { top: 9px; width: 11px; border-top: 1px dotted #a0a088; }
.tree li:last-child::before { bottom: 9px; }

.sash { position: relative; width: 5px; flex: none; border-right: 1px solid #999888; }
.browser-pane { width: 38px; flex: none; border-right: 1px solid #999888; }
.sash button {
  position: absolute;
  left: 0;
  width: 5px;
  height: 50px;
  border: 1px solid #aaa899;
  border-left-color: #fff;
  background: #e2e0d4;
  color: #000;
  font-weight: bold;
}
.sash-left { top: 248px; }
.sash-right { top: 298px; }

.viewport { flex: 1; min-width: 0; background: linear-gradient(#005f9f, #003260 50%, #000f30); }
.viewport svg { width: 100%; height: 100%; max-height: 596px; }
.wire { fill: none; stroke: #ffa500; shape-rendering: crispEdges; }
.csys { fill: none; stroke: #ffff00; shape-rendering: crispEdges; }
.part-label { font: 300 20px "Open Sans", sans-serif; fill: #fff; }
.axis-label { font: 300 17px "Open Sans", sans-serif; fill: #fff; }

.side-tools { display: flex; width: 69px; flex: none; }
.toolcol { width: 28px; }
.toolcol.wide { width: 41px; }
.flyout { display: flex; }
.hgrip { display: block; height: 10px; padding-top: 1px; }
.hgrip::before {
  content: "";
  display: block;
  height: 3px;
  background: repeating-linear-gradient(90deg, #9c9c90 0 3px, #efeee6 3px 5px);
}

.overlay { position: absolute; top: -1px; right: 5px; display: flex; align-items: flex-start; }
.drop-zone {
  display: flex;
  justify-content: space-between;
  width: 110px;
  height: 33px;
  border: 1px solid #333;
  border-radius: 0 0 5px 5px;
  background: linear-gradient(#606060, #484848);
  color: #858585;
}
.drop-zone svg { width: 44px; height: 18px; }
.drop-text { display: flex; flex-direction: column; font: 13px/15px "Liberation Sans", "Noto Sans CJK SC", sans-serif; white-space: nowrap; }
.green-tip { width: 8px; height: 23px; background: linear-gradient(135deg, #a8dca0, #248c24 60%); }
.thunder {
  width: 68px;
  height: 23px;
  padding-left: 11px;
  border-radius: 0 0 6px 0;
  background: linear-gradient(#e8f8e8, #b4dcb8);
  color: #2b9130;
  font: italic bold 16px/22px "Open Sans", "Noto Sans CJK SC", sans-serif;
}
.close { width: 8px; height: 18px; border-radius: 0 0 4px 0; background: linear-gradient(#e0a090, #b83820 50%, #c86850); }

.watermark {
  position: absolute;
  right: 3px;
  bottom: 4px;
  display: flex;
  width: 206px;
  height: 62px;
  background: rgba(255, 255, 255, .36);
}
.watermark svg { width: 58px; height: 60px; }
.brand { display: flex; flex-direction: column; white-space: nowrap; }
.brand strong { padding-left: 12px; font: 900 29px/39px "Noto Sans CJK SC", sans-serif; color: rgba(0, 125, 45, .6); }
.brand span { font: 15px/18px "Open Sans", sans-serif; color: rgba(70, 150, 140, .6); }
```
